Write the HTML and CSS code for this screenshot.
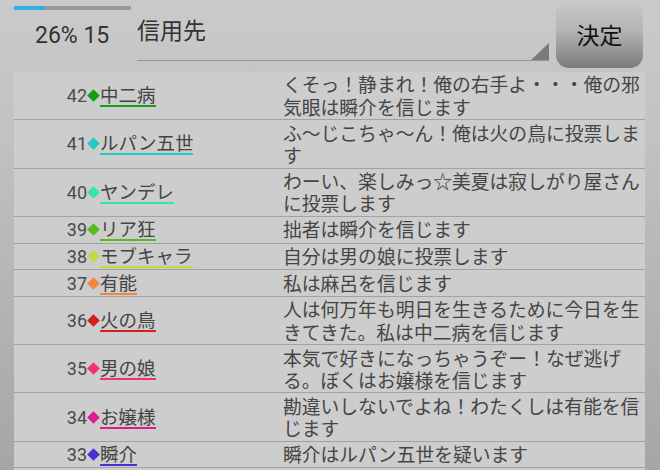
FILE: index.html
```html
<!DOCTYPE html>
<html lang="ja">
<head>
  <meta charset="UTF-8" />
  <title>投票</title>
  <link rel="stylesheet" href="styles.css">
</head>
<body>

  <!-- 上部バー -->
  <div class="top">
    <div class="status">
      <div class="progress"><div class="progress-fill"></div></div>
      <div class="stat">26% 15</div>
    </div>
    <div class="select">信用先</div>
    <button class="decide">決定</button>
  </div>

  <!-- ログ一覧 -->
  <div class="log">
    <div class="row">
      <div class="who"><span class="num">42</span><span class="dia"><i class="c42"></i></span><span class="name u42">中二病</span></div>
      <div class="msg">くそっ！静まれ！俺の右手よ・・・俺の邪気眼は瞬介を信じます</div>
    </div>
    <div class="row">
      <div class="who"><span class="num">41</span><span class="dia"><i class="c41"></i></span><span class="name u41">ルパン五世</span></div>
      <div class="msg">ふ〜じこちゃ〜ん！俺は火の鳥に投票します</div>
    </div>
    <div class="row">
      <div class="who"><span class="num">40</span><span class="dia"><i class="c40"></i></span><span class="name u40">ヤンデレ</span></div>
      <div class="msg">わーい、楽しみっ☆美夏は寂しがり屋さんに投票します</div>
    </div>
    <div class="row">
      <div class="who"><span class="num">39</span><span class="dia"><i class="c39"></i></span><span class="name u39">リア狂</span></div>
      <div class="msg">拙者は瞬介を信じます</div>
    </div>
    <div class="row">
      <div class="who"><span class="num">38</span><span class="dia"><i class="c38"></i></span><span class="name u38">モブキャラ</span></div>
      <div class="msg">自分は男の娘に投票します</div>
    </div>
    <div class="row">
      <div class="who"><span class="num">37</span><span class="dia"><i class="c37"></i></span><span class="name u37">有能</span></div>
      <div class="msg">私は麻呂を信じます</div>
    </div>
    <div class="row">
      <div class="who"><span class="num">36</span><span class="dia"><i class="c36"></i></span><span class="name u36">火の鳥</span></div>
      <div class="msg">人は何万年も明日を生きるために今日を生きてきた。私は中二病を信じます</div>
    </div>
    <div class="row">
      <div class="who"><span class="num">35</span><span class="dia"><i class="c35"></i></span><span class="name u35">男の娘</span></div>
      <div class="msg">本気で好きになっちゃうぞー！なぜ逃げる。ぼくはお嬢様を信じます</div>
    </div>
    <div class="row">
      <div class="who"><span class="num">34</span><span class="dia"><i class="c34"></i></span><span class="name u34">お嬢様</span></div>
      <div class="msg">勘違いしないでよね！わたくしは有能を信じます</div>
    </div>
    <div class="row">
      <div class="who"><span class="num">33</span><span class="dia"><i class="c33"></i></span><span class="name u33">瞬介</span></div>
      <div class="msg">瞬介はルパン五世を疑います</div>
    </div>
  </div>

</body>
</html>
```

FILE: styles.css
```css
html, body {
  margin: 0;
  height: 100%;
}

body {
  font-family: "Noto Sans CJK JP", Roboto, sans-serif;
  background: linear-gradient(#cacaca, #c3c3c3 25%, #a6a6a6);
  padding: 0 15px 0 14px;
  box-sizing: border-box;
  overflow: hidden;
  display: flex;
  flex-direction: column;
}

/* 上部バー */
.top {
  display: flex;
  height: 72px;
  flex-shrink: 0;
}

.status {
  width: 123px;
  padding-top: 6px;
}

.progress {
  width: 117px;
  height: 4px;
  background: #9a9a9a;
}

.progress-fill {
  width: 31px;
  height: 4px;
  background: #33b0e0;
}

.stat {
  margin-top: 12px;
  padding-left: 21px;
  font-family: Roboto, sans-serif;
  font-size: 23px;
  line-height: 27px;
  color: #333;
}

.select {
  position: relative;
  width: 412px;
  height: 61px;
  box-sizing: border-box;
  padding-top: 14px;
  border-bottom: 1px solid #959595;
  font-size: 23px;
  line-height: 30px;
  color: #333;
}

.select::after {
  content: "";
  position: absolute;
  right: 0;
  bottom: 0;
  border-left: 18px solid transparent;
  border-bottom: 17px solid #7a7a7a;
}

.decide {
  margin-left: 7px;
  width: 87px;
  height: 68px;
  border: none;
  border-radius: 13px;
  background: linear-gradient(#c9c9c9, #b4b4b4 45%, #7b7b7b);
  font-family: "Noto Sans CJK JP", sans-serif;
  font-size: 23px;
  color: #111;
  padding: 0;
}

/* ログ一覧 */
.log {
  flex: 1;
  background: #cdcdcd;
  overflow: hidden;
}

.row {
  display: flex;
  padding: 1.35px 0;
  border-bottom: 1px solid #a2a2a2;
}

.who {
  width: 269px;
  display: flex;
  align-items: center;
  flex-shrink: 0;
}

.num {
  width: 73px;
  text-align: right;
  font-family: Roboto, sans-serif;
  font-size: 18px;
  color: #4a4a4a;
}

.dia {
  width: 13px;
  display: flex;
  justify-content: center;
}

.dia i {
  display: block;
  width: 9px;
  height: 9px;
  transform: rotate(45deg);
}

.name {
  font-size: 18.5px;
  line-height: 21px;
  color: #444;
  border-bottom: 2px solid;
}

.msg {
  width: 360px;
  font-size: 18.8px;
  line-height: 22.3px;
  color: #454545;
}

.c42 { background: #14a014; }
.c41 { background: #25c8c8; }
.c40 { background: #35e3ae; }
.c39 { background: #5ab822; }
.c38 { background: #c3d843; }
.c37 { background: #f58442; }
.c36 { background: #d21f22; }
.c35 { background: #f2336f; }
.c34 { background: #e0198f; }
.c33 { background: #4a2fd3; }

.u42 { border-color: #14a014; }
.u41 { border-color: #25c8c8; }
.u40 { border-color: #35e3ae; }
.u39 { border-color: #5ab822; }
.u38 { border-color: #c3d843; }
.u37 { border-color: #f58442; }
.u36 { border-color: #d21f22; }
.u35 { border-color: #f2336f; }
.u34 { border-color: #e0198f; }
.u33 { border-color: #4a2fd3; }
```
